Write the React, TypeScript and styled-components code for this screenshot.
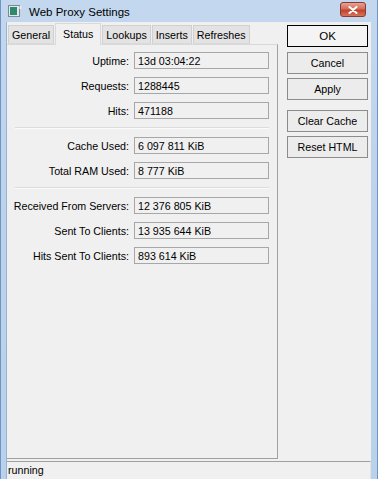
import React, { FC } from "react";
import styled, { createGlobalStyle } from "styled-components";

const GlobalStyle = createGlobalStyle`
  html, body {
    margin: 0;
    padding: 0;
    width: 378px;
    height: 479px;
    overflow: hidden;
    background: #b9d1ea;
  }
  * {
    box-sizing: border-box;
  }
  body {
    font-family: "Liberation Sans", Arial, sans-serif;
    font-size: 10.7px;
    color: #000;
  }
`;

const Window = styled.div`
  width: 378px;
  height: 479px;
  display: flex;
  flex-direction: column;
  background: linear-gradient(to bottom, #c3d8ee 0%, #bdd3eb 40%, #b9d1ea 100%);
  border-left: 1px solid #6d94c4;
  border-right: 1px solid #6d94c4;
  overflow: hidden;
`;

const TitleBar = styled.div`
  height: 22px;
  display: flex;
  align-items: center;
  padding: 0 11px 0 7px;
  flex-shrink: 0;
`;

const TitleText = styled.span`
  font-size: 11.5px;
  margin-left: 6px;
  margin-top: 1px;
  color: #000;
`;

const CloseButton = styled.div`
  margin-left: auto;
  width: 26px;
  height: 15px;
  margin-top: -3px;
  border: 1px solid #8a3a30;
  border-radius: 3px;
  background: linear-gradient(to bottom, #e5a395 0%, #d46e5c 45%, #c1402b 55%, #d7735c 100%);
  display: flex;
  align-items: center;
  justify-content: center;
`;

const Client = styled.div`
  flex: 1;
  display: flex;
  flex-direction: column;
  margin: 0 6px 0 5px;
  background: #f0f0f0;
  border-left: 1px solid #99b4d1;
  min-height: 0;
`;

const Main = styled.div`
  flex: 1;
  display: flex;
  min-height: 0;
`;

const LeftPane = styled.div`
  width: 271px;
  display: flex;
  flex-direction: column;
  padding-bottom: 2px;
`;

const TabRow = styled.div`
  height: 22px;
  display: flex;
  align-items: flex-end;
  padding-left: 1px;
  flex-shrink: 0;
`;

const Tab = styled.div<{ $active?: boolean }>`
  height: ${(p) => (p.$active ? "22px" : "19px")};
  padding: ${(p) => (p.$active ? "0 7px 2px" : "0 3px")};
  display: flex;
  align-items: center;
  background: ${(p) => (p.$active ? "#f0f0f0" : "#e3e3e3")};
  border: 1px solid ${(p) => (p.$active ? "#d9d9d9" : "#d0d0d0")};
  border-bottom: ${(p) => (p.$active ? "none" : "1px solid #d9d9d9")};
  margin-bottom: ${(p) => (p.$active ? "-1px" : "0")};
  margin-right: 1px;
  position: relative;
  z-index: ${(p) => (p.$active ? 1 : 0)};
  white-space: nowrap;
`;

const Panel = styled.div`
  flex: 1;
  border-top: 1px solid #d9d9d9;
  border-right: 1px solid #a0a0a0;
  border-bottom: 1px solid #a0a0a0;
  padding-top: 7px;
  display: flex;
  flex-direction: column;
  gap: 8px;
`;

const Row = styled.div`
  display: flex;
  align-items: center;
  height: 17px;
`;

const Label = styled.div`
  width: 122px;
  text-align: right;
  white-space: nowrap;
`;

const ValueBox = styled.div`
  margin-left: 5px;
  width: 135px;
  height: 17px;
  border: 1px solid #a7a7a7;
  background: #f0f0f0;
  padding-left: 3px;
  display: flex;
  align-items: center;
`;

const Separator = styled.div`
  margin-left: 8px;
  width: 254px;
  height: 1px;
  background: #dcdcdc;
  border-bottom: 1px solid #fbfbfb;
  box-sizing: content-box;
`;

const RightPane = styled.div`
  flex: 1;
  padding: 3px 0 0 9px;
  display: flex;
  flex-direction: column;
`;

const Button = styled.div<{ $default?: boolean; $gapTop?: number }>`
  width: 81px;
  height: 22px;
  margin-top: ${(p) => p.$gapTop ?? 4}px;
  border: 1px solid ${(p) => (p.$default ? "#000" : "#8c8c8c")};
  background: ${(p) => (p.$default ? "#f4f4f4" : "#ececec")};
  display: flex;
  align-items: center;
  justify-content: center;
  font-size: ${(p) => (p.$default ? "11.5px" : "10.7px")};
`;

const StatusBar = styled.div`
  height: 18px;
  flex-shrink: 0;
  border-top: 1px solid #a0a0a0;
  border-right: 1px solid #e3e3e3;
  padding-left: 1px;
  padding-top: 2px;
`;

const AppIcon: FC = () => (
  <svg width="15" height="12" viewBox="0 0 15 12">
    <rect x="0.5" y="0.5" width="11" height="11" fill="#dfe8ef" stroke="#7d8a96" />
    <rect x="2" y="2" width="7" height="8" fill="#2f8a6a" />
    <rect x="11.5" y="1" width="2" height="3" fill="#e9eef3" />
    <rect x="12" y="6" width="1.5" height="5" fill="#c7d2dc" />
  </svg>
);

const CloseIcon: FC = () => (
  <svg width="10" height="8" viewBox="0 0 10 8">
    <path d="M1.5 1 L8.5 7 M8.5 1 L1.5 7" stroke="#fff" strokeWidth="2" strokeLinecap="round" />
  </svg>
);

type Field = { label: string; value: string };

const groups: Field[][] = [
  [
    { label: "Uptime:", value: "13d 03:04:22" },
    { label: "Requests:", value: "1288445" },
    { label: "Hits:", value: "471188" },
  ],
  [
    { label: "Cache Used:", value: "6 097 811 KiB" },
    { label: "Total RAM Used:", value: "8 777 KiB" },
  ],
  [
    { label: "Received From Servers:", value: "12 376 805 KiB" },
    { label: "Sent To Clients:", value: "13 935 644 KiB" },
    { label: "Hits Sent To Clients:", value: "893 614 KiB" },
  ],
];

const tabs = ["General", "Status", "Lookups", "Inserts", "Refreshes"];

const App: FC = () => {
  return (
    <>
      <GlobalStyle />
      <Window>
        <TitleBar>
          <AppIcon />
          <TitleText>Web Proxy Settings</TitleText>
          <CloseButton>
            <CloseIcon />
          </CloseButton>
        </TitleBar>
        <Client>
          <Main>
            <LeftPane>
              <TabRow>
                {tabs.map((t) => (
                  <Tab key={t} $active={t === "Status"}>
                    {t}
                  </Tab>
                ))}
              </TabRow>
              <Panel>
                {groups.map((group, gi) => (
                  <React.Fragment key={gi}>
                    {gi > 0 && <Separator />}
                    {group.map((f) => (
                      <Row key={f.label}>
                        <Label>{f.label}</Label>
                        <ValueBox>{f.value}</ValueBox>
                      </Row>
                    ))}
                  </React.Fragment>
                ))}
              </Panel>
            </LeftPane>
            <RightPane>
              <Button $default $gapTop={0}>
                OK
              </Button>
              <Button $gapTop={5}>Cancel</Button>
              <Button>Apply</Button>
              <Button $gapTop={10}>Clear Cache</Button>
              <Button>Reset HTML</Button>
            </RightPane>
          </Main>
          <StatusBar>running</StatusBar>
        </Client>
      </Window>
    </>
  );
};

export default App;
